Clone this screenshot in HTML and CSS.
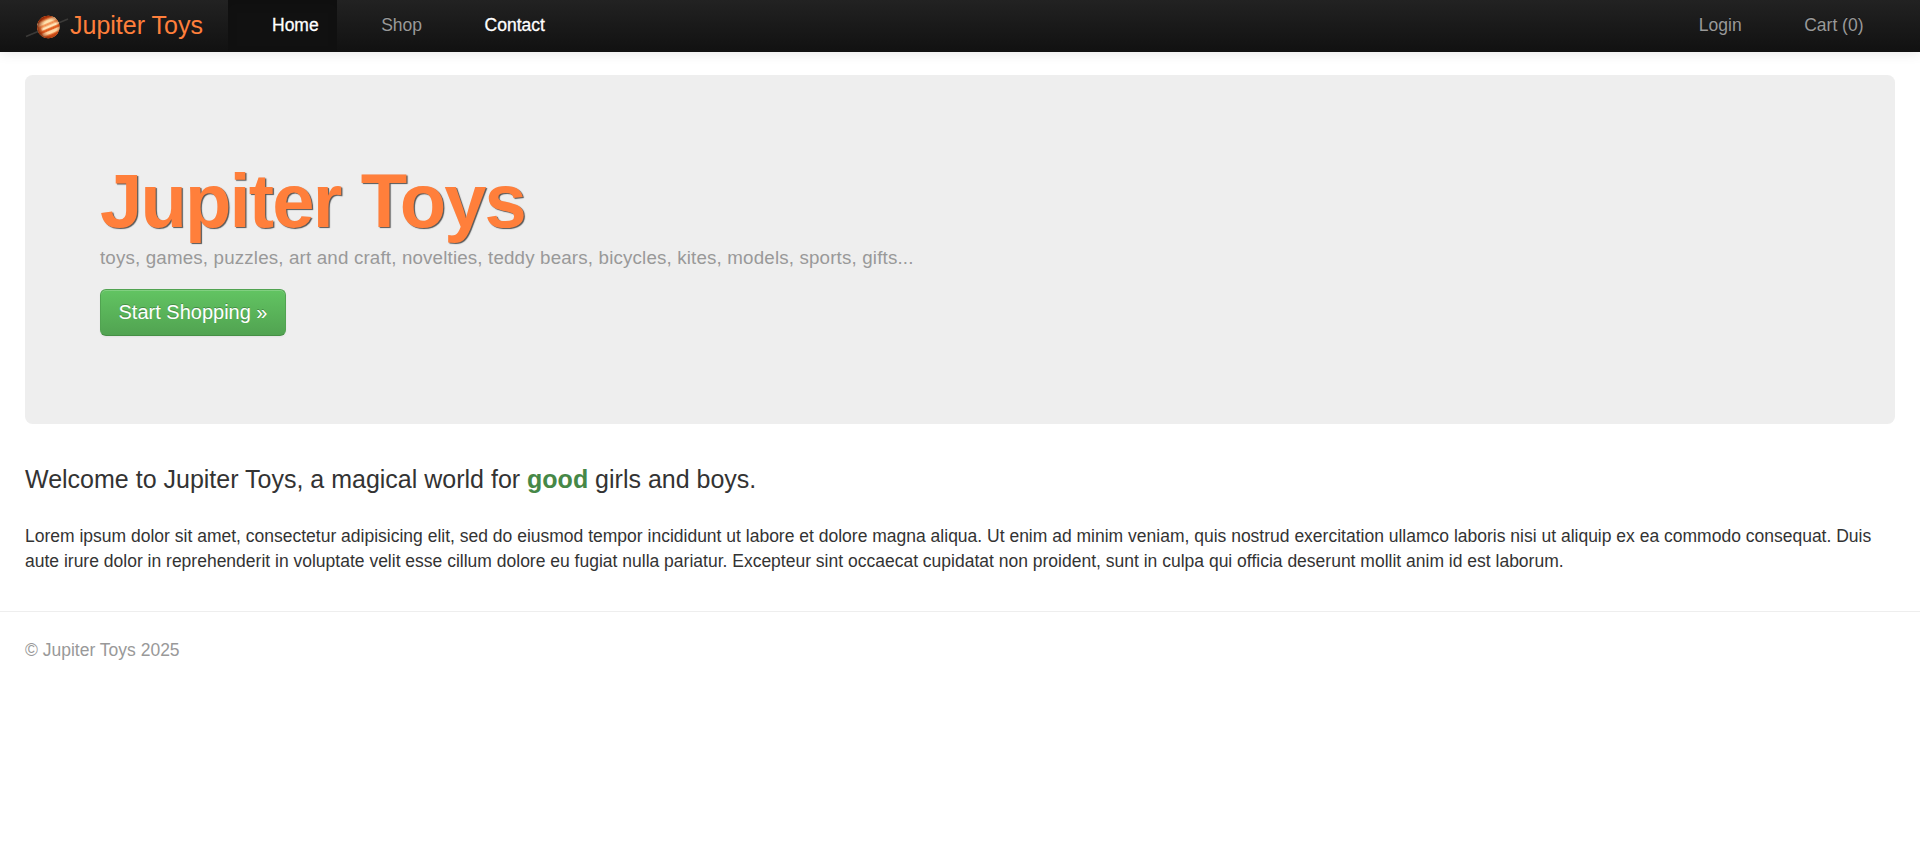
FILE: index.html
```html
<!DOCTYPE html>
<html lang="en">
<head>
<meta charset="utf-8">
<title>Jupiter Toys</title>
<link rel="stylesheet" href="styles.css">
</head>
<body>
<header class="navbar">
  <a class="brand">
    <svg class="logo" viewBox="0 0 44 26" width="44" height="26" aria-hidden="true">
      <defs>
        <radialGradient id="shade" cx=".58" cy=".5" r=".58">
          <stop offset=".5" stop-color="#c03800" stop-opacity="0"/>
          <stop offset="1" stop-color="#5a1000" stop-opacity=".85"/>
        </radialGradient>
        <filter id="soft"><feGaussianBlur stdDeviation=".7"/></filter>
        <clipPath id="disc"><circle cx="23.3" cy="13" r="11.2"/></clipPath>
      </defs>
      <path d="M1 22.500 43 5" stroke="#3b3a38" stroke-width="1.6"/>
      <g clip-path="url(#disc)">
        <rect x="10" width="27" height="26" fill="#f08a48"/>
        <g transform="rotate(-23 23.3 13)" fill="none" filter="url(#soft)">
          <path d="M10 3H37" stroke="#d04a14" stroke-width="3"/>
          <path d="M14 7.500H35" stroke="#ffe2ae" stroke-width="3.800"/>
          <path d="M10 10.500H37" stroke="#f08a4c" stroke-width="1.5"/>
          <path d="M16 12.800H37" stroke="#ffe4b8" stroke-width="2.500"/>
          <path d="M10 15.700H37" stroke="#e0581e" stroke-width="2"/>
          <path d="M15 18.600H37" stroke="#ffd8a4" stroke-width="3"/>
          <path d="M10 22.500H37" stroke="#d8541a" stroke-width="3"/>
        </g>
        <circle cx="23.3" cy="13" r="11.2" fill="url(#shade)"/>
      </g>
    </svg>
    <span class="brand-name">Jupiter Toys</span>
  </a>
  <nav class="nav">
    <a class="nav-link active">Home</a>
    <a class="nav-link">Shop</a>
    <a class="nav-link hover">Contact</a>
  </nav>
  <nav class="nav nav-right">
    <a class="nav-link">Login</a>
    <a class="nav-link">Cart (0)</a>
  </nav>
</header>
<main class="container">
  <section class="hero">
    <h1 class="hero-title">Jupiter Toys</h1>
    <p class="tagline">toys, games, puzzles, art and craft, novelties, teddy bears, bicycles, kites, models, sports, gifts...</p>
    <a class="btn">Start Shopping »</a>
  </section>
  <p class="lead">Welcome to Jupiter Toys, a magical world for <strong class="good">good</strong> girls and boys.</p>
  <p class="text">Lorem ipsum dolor sit amet, consectetur adipisicing elit, sed do eiusmod tempor incididunt ut labore et dolore magna aliqua. Ut enim ad minim veniam, quis nostrud exercitation ullamco laboris nisi ut aliquip ex ea commodo consequat. Duis<br>aute irure dolor in reprehenderit in voluptate velit esse cillum dolore eu fugiat nulla pariatur. Excepteur sint occaecat cupidatat non proident, sunt in culpa qui officia deserunt mollit anim id est laborum.</p>
</main>
<footer class="footer">© Jupiter Toys 2025</footer>
</body>
</html>
```

FILE: styles.css
```css
* { box-sizing: border-box; }
body {
  margin: 0;
  background: #fff;
  color: #333;
  font: 17.5px/25px "Liberation Sans", Arial, sans-serif;
}
.navbar {
  display: flex;
  height: 52px;
  padding: 0 38px 0 25px;
  background: linear-gradient(#222, #111);
  box-shadow: 0 1px 12px rgba(0, 0, 0, .1);
}
.brand {
  display: flex;
  width: 203px;
  color: #ff7f3b;
  font-size: 25px;
}
.logo { margin-top: 14px; flex: none; }
.brand-name { margin: 12.5px 0 0 1px; white-space: nowrap; }
.nav { display: flex; }
.nav-right { margin-left: auto; }
.nav-link {
  padding: 12.5px 18.5px 0 44px;
  color: #999;
  white-space: nowrap;
  text-shadow: 0 -1px 0 rgba(0, 0, 0, .25);
}
.nav-link.active {
  height: 51px;
  color: #fff;
  background: #111;
  box-shadow: inset 0 4px 10px rgba(0, 0, 0, .125);
  -webkit-text-stroke: .3px #fff;
}
.nav-link.hover {
  color: #fff;
  -webkit-text-stroke: .3px #fff;
}
.container { padding: 23px 25px 0; }
.hero {
  height: 349px;
  padding: 88px 75px 0;
  border-radius: 7.5px;
  background: #eee;
}
.hero-title {
  margin: 0 0 1px;
  color: #ff7f3b;
  font-size: 76px;
  line-height: 75px;
  letter-spacing: -1.85px;
  word-spacing: 1px;
  text-shadow: 1.25px 1.25px 1px #555;
}
.tagline {
  margin: 0 0 12.5px;
  color: #999;
  font-size: 18.75px;
  line-height: 37.5px;
  letter-spacing: .16px;
}
.btn {
  display: inline-block;
  height: 47px;
  padding: 10px 17.5px;
  border: 1px solid;
  border-color: #51a351 #51a351 #458f45;
  border-radius: 6px;
  color: #fff;
  background: linear-gradient(#62c462, #51a351);
  box-shadow: inset 0 1px 0 rgba(255, 255, 255, .2), 0 1px 2px rgba(0, 0, 0, .05);
  font-size: 20px;
  text-shadow: 0 -1px 0 rgba(0, 0, 0, .25);
}
.lead {
  margin: 36.5px 0 26px;
  font-size: 25px;
  line-height: 37.5px;
}
.good { color: #468847; }
.text { margin: 0; white-space: nowrap; }
.footer {
  margin-top: 37px;
  padding: 26px 25px 0;
  border-top: 1px solid #eee;
  color: #999;
}
```
